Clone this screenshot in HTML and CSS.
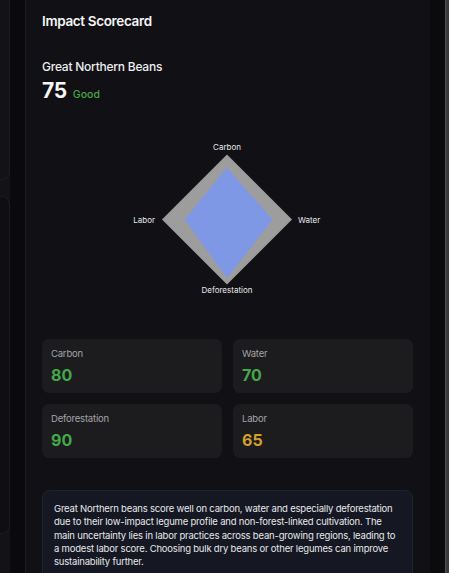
FILE: index.html
```html
<!DOCTYPE html>
<html lang="en">
<head>
<meta charset="utf-8">
<title>Impact Scorecard</title>
<link rel="stylesheet" href="styles.css">
</head>
<body>
<div class="frame">
  <aside class="side">
    <div class="side-card side-card-a"></div>
    <div class="side-card side-card-b"></div>
  </aside>
  <div class="gutter"></div>
  <main class="panel">
    <h1 class="title">Impact Scorecard</h1>
    <h2 class="product">Great Northern Beans</h2>
    <div class="score-row">
      <span class="score">75</span>
      <span class="grade">Good</span>
    </div>
    <svg class="radar" width="371" height="229" viewBox="0 0 371 229">
      <polygon points="185,44.5 250,109.5 185,174.5 120,109.5" fill="#9d9d9d"/>
      <polygon points="185,57.5 230.5,109.5 185,168 142.75,109.5" fill="#7f98e6"/>
      <text x="185" y="40" text-anchor="middle" class="axis">Carbon</text>
      <text x="256" y="112.5" text-anchor="start" class="axis">Water</text>
      <text x="185" y="183" text-anchor="middle" class="axis">Deforestation</text>
      <text x="113" y="112.5" text-anchor="end" class="axis">Labor</text>
    </svg>
    <div class="metrics">
      <div class="metric">
        <div class="metric-label">Carbon</div>
        <div class="metric-value good">80</div>
      </div>
      <div class="metric">
        <div class="metric-label">Water</div>
        <div class="metric-value good">70</div>
      </div>
      <div class="metric">
        <div class="metric-label">Deforestation</div>
        <div class="metric-value good">90</div>
      </div>
      <div class="metric">
        <div class="metric-label">Labor</div>
        <div class="metric-value fair">65</div>
      </div>
    </div>
    <p class="summary">Great Northern beans score well on carbon, water and especially deforestation due to their low-impact legume profile and non-forest-linked cultivation. The main uncertainty lies in labor practices across bean-growing regions, leading to a modest labor score. Choosing bulk dry beans or other legumes can improve sustainability further.</p>
  </main>
  <div class="gutter-right"></div>
  <div class="scrollbar"></div>
</div>
</body>
</html>
```
FILE: styles.css
```css
* { box-sizing: border-box; }
html, body { margin: 0; padding: 0; }
body {
  background: #09090c;
  font-family: Inter, "Noto Sans", "Liberation Sans", sans-serif;
  color: #f2f2f4;
  overflow: hidden;
}
.frame {
  display: flex;
  height: 573px;
  width: 449px;
}
.side {
  width: 10px;
  flex: none;
  background: #121217;
  display: flex;
  flex-direction: column;
  gap: 16px;
}
.side-card {
  border: 1px solid #1b1b21;
  border-left: none;
  border-radius: 0 8px 8px 0;
}
.side-card-a { height: 190px; margin-top: -10px; }
.side-card-b { height: 338px; background: #0f0f13; }
.gutter { width: 15px; flex: none; background: #0a0a0d; }
.panel {
  width: 405px;
  flex: none;
  background: #111115;
  border-left: 1px solid #1c1c22;
  padding: 12px 17px 0 16px;
  overflow: hidden;
}
.gutter-right { width: 15px; flex: none; background: #0b0b0e; }
.scrollbar {
  width: 4px;
  flex: none;
  background: #3a3a3d;
  border-left: 1px solid #505054;
}
.title {
  margin: 0;
  font-size: 13.5px;
  letter-spacing: -0.35px;
  line-height: 18px;
  font-weight: 600;
  color: #f4f4f6;
}
.product {
  margin: 29px 0 0;
  font-size: 12px;
  letter-spacing: -0.24px;
  line-height: 16px;
  font-weight: 500;
  color: #ededf0;
}
.score-row {
  display: flex;
  align-items: baseline;
  gap: 6px;
  margin-top: 2px;
  height: 28px;
}
.score {
  font-size: 21px;
  letter-spacing: -0.3px;
  line-height: 28px;
  font-weight: 700;
  color: #f7f7f8;
}
.grade {
  font-size: 10.5px;
  font-weight: 500;
  color: #43a547;
}
.radar {
  display: block;
  margin-top: 5px;
}
.axis {
  font-family: Inter, "Noto Sans", "Liberation Sans", sans-serif;
  font-size: 8px;
  fill: #e8e8ec;
}
.metrics {
  display: grid;
  grid-template-columns: 1fr 1fr;
  gap: 11px;
}
.metric {
  height: 54px;
  background: #1c1c1f;
  border-radius: 7px;
  padding: 9px 9px 0;
}
.metric-label {
  font-size: 9.5px;
  letter-spacing: -0.2px;
  line-height: 12px;
  color: #a3a3a8;
}
.metric-value {
  margin-top: 4px;
  font-size: 16px;
  line-height: 22px;
  font-weight: 700;
}
.good { color: #45a84a; }
.fair { color: #d4a02c; }
.summary {
  margin: 32px 0 0;
  background: #151822;
  border: 1px solid #1e2332;
  border-radius: 8px;
  padding: 11px 12px 12px 11px;
  font-size: 9.5px;
  letter-spacing: -0.2px;
  line-height: 13.3px;
  color: #e6e7ea;
}
```
